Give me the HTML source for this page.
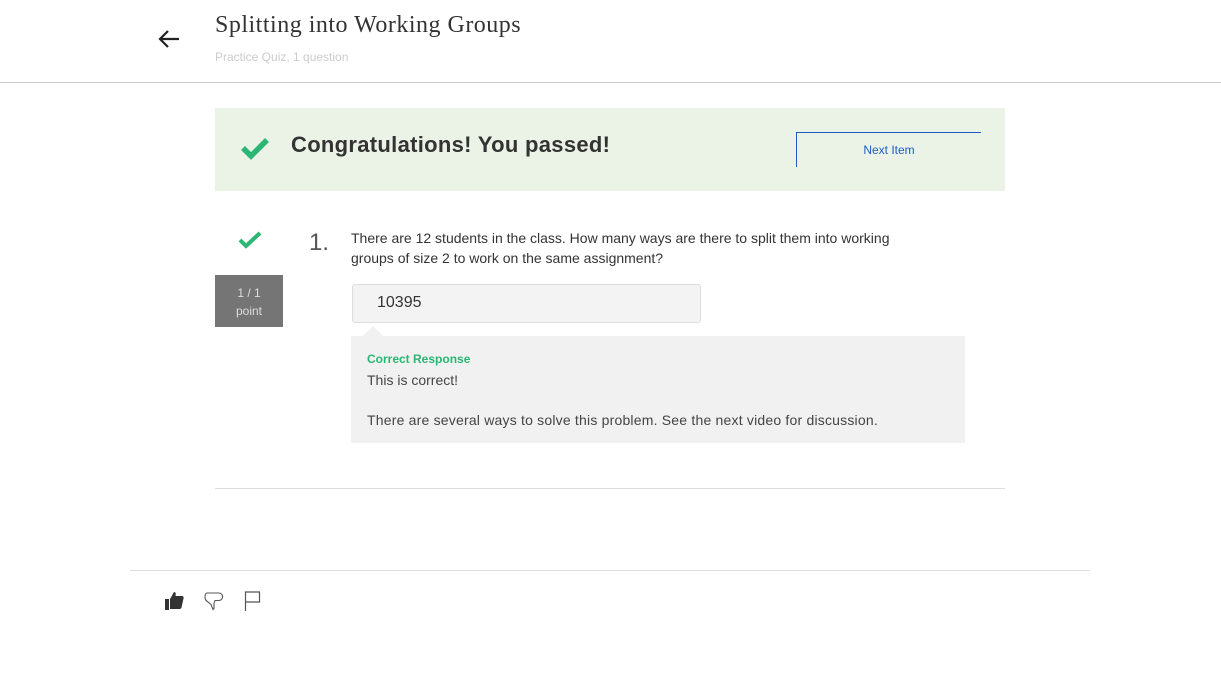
<!DOCTYPE html>
<html><head><meta charset="utf-8"><style>
*{margin:0;padding:0;box-sizing:border-box}
body{width:1221px;height:697px;background:#fff;position:relative;font-family:"Liberation Sans",sans-serif;overflow:hidden}
.a{position:absolute}
</style></head><body>
<svg class="a" style="left:157px;top:29px" width="24" height="20" viewBox="0 0 24 20"><path d="M22 10H3M11 2L3 10l8 8" fill="none" stroke="#222" stroke-width="2.2"/></svg>
<div class="a" style="left:215px;top:12px;font-family:'Liberation Serif',serif;font-size:24px;letter-spacing:0.5px;color:#333">Splitting into Working Groups</div>
<div class="a" style="left:215px;top:50px;font-size:12px;color:#ccc">Practice Quiz, 1 question</div>
<div class="a" style="left:0;top:82px;width:1221px;height:1px;background:#ccc"></div>

<div class="a" style="left:215px;top:108px;width:790px;height:83px;background:#ebf3e7"></div>
<svg class="a" style="left:240px;top:136px" width="30" height="24" viewBox="0 0 30 24"><path d="M3 12l8 8L27 4" fill="none" stroke="#2bb673" stroke-width="5.5"/></svg>
<div class="a" style="left:291px;top:132px;font-size:22px;font-weight:bold;color:#333;letter-spacing:0.3px">Congratulations! You passed!</div>
<div class="a" style="left:796px;top:132px;width:185px;height:35px;border-top:1px solid #1f5ac6;border-left:1px solid #1f5ac6;font-size:12px;color:#1f5ac6;text-align:center;line-height:34px">Next Item</div>

<svg class="a" style="left:238px;top:231px" width="24" height="18" viewBox="0 0 24 18"><path d="M2 9l6 6L22 2" fill="none" stroke="#2bb673" stroke-width="4"/></svg>
<div class="a" style="left:215px;top:275px;width:68px;height:52px;background:#757575;color:#ddd;font-size:12px;text-align:center;padding-top:9px;line-height:18px">1 / 1<br>point</div>
<div class="a" style="left:309px;top:229px;font-size:24px;color:#555;font-weight:300">1.</div>
<div class="a" style="left:351px;top:228px;width:580px;font-size:14px;line-height:20px;color:#333">There are 12 students in the class. How many ways are there to split them into working groups of size 2 to work on the same assignment?</div>
<div class="a" style="left:352px;top:284px;width:349px;height:39px;background:#f3f3f3;border:1px solid #ddd;border-radius:3px;font-size:16px;color:#333;padding:9px 0 0 24px">10395</div>
<div class="a" style="left:351px;top:336px;width:614px;height:107px;background:#f1f1f1"></div>
<div class="a" style="left:363px;top:326px;width:0;height:0;border-left:10px solid transparent;border-right:10px solid transparent;border-bottom:10px solid #f1f1f1"></div>
<div class="a" style="left:367px;top:352px;font-size:12px;font-weight:bold;color:#2bb673">Correct Response</div>
<div class="a" style="left:367px;top:372px;font-size:14px;color:#444">This is correct!</div>
<div class="a" style="left:367px;top:412px;font-size:14px;color:#444;letter-spacing:0.2px">There are several ways to solve this problem. See the next video for discussion.</div>

<div class="a" style="left:215px;top:488px;width:790px;height:1px;background:#ddd"></div>
<div class="a" style="left:130px;top:570px;width:960px;height:1px;background:#ddd"></div>
<svg class="a" style="left:163px;top:590px" width="22" height="22" viewBox="0 0 22 22"><path d="M2 9h4v11H2zM7 9l4-7c2 0 2 2 1.5 4H19c1 0 2 1 1.5 2.5l-2 9c-.3 1-1 1.5-2 1.5H7z" fill="#333"/></svg>
<svg class="a" style="left:203px;top:590px" width="22" height="22" viewBox="0 0 22 22"><path d="M4 3h12c2 0 4 2 3.5 4.5-.5 2-2 3-4 3H12l-1 3 0 5-1 1-2-5-3-2.5C3 11 2 9 2 7 2 4 3 3 4 3z" fill="none" stroke="#555" stroke-width="1.1"/></svg>
<svg class="a" style="left:243px;top:590px" width="20" height="22" viewBox="0 0 20 22"><path d="M2.5 21V2h14v10h-14" fill="none" stroke="#555" stroke-width="1.2"/></svg>
</body></html>
